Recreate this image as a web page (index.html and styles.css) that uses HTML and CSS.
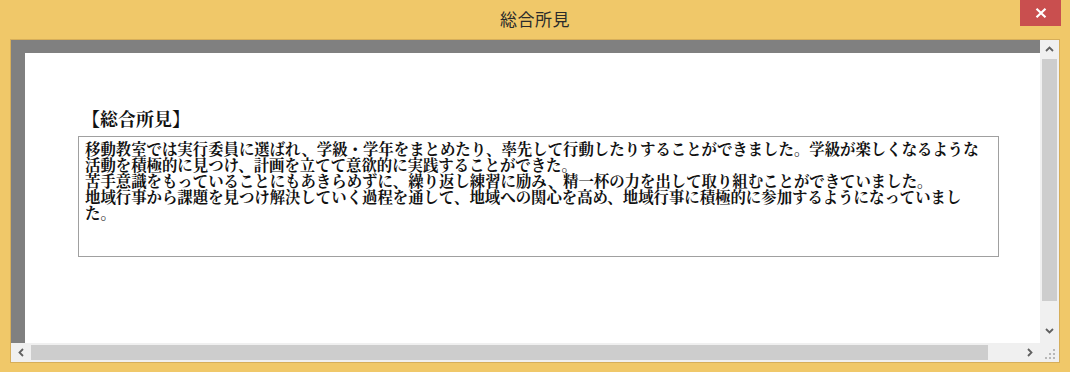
FILE: index.html
```html
<!DOCTYPE html>
<html lang="ja">
<head>
    <meta charset="UTF-8">
    <title>総合所見</title>
    <link rel="stylesheet" href="styles.css">
</head>
<body>
<div class="window">
    <div class="title-bar">
        <span class="title">総合所見</span>
        <button type="button" class="close-btn">
            <svg width="12" height="10" viewBox="0 0 12 10"><path d="M1.5 0.8 L10.5 9.2 M10.5 0.8 L1.5 9.2" stroke="#fff" stroke-width="2.2" fill="none"/></svg>
        </button>
    </div>

    <div class="frame">
        <div class="viewport">
            <div class="page">
                <h2 class="section-title">【総合所見】</h2>
                <div class="remarks">移動教室では実行委員に選ばれ、学級・学年をまとめたり、率先して行動したりすることができました。学級が楽しくなるような活動を積極的に見つけ、計画を立てて意欲的に実践することができた。<br>苦手意識をもっていることにもあきらめずに、繰り返し練習に励み、精一杯の力を出して取り組むことができていました。<br>地域行事から課題を見つけ解決していく過程を通して、地域への関心を高め、地域行事に積極的に参加するようになっていました。</div>
            </div>
        </div>

        <div class="vscroll">
            <svg class="arrow" width="9" height="6" viewBox="0 0 9 6"><path d="M1 5 L4.5 1.5 L8 5" stroke="#606060" stroke-width="1.8" fill="none"/></svg>
            <div class="vthumb"></div>
            <svg class="arrow" width="9" height="6" viewBox="0 0 9 6"><path d="M1 1 L4.5 4.5 L8 1" stroke="#606060" stroke-width="1.8" fill="none"/></svg>
        </div>

        <div class="hscroll">
            <svg class="arrow" width="6" height="9" viewBox="0 0 6 9"><path d="M5 1 L1.5 4.5 L5 8" stroke="#606060" stroke-width="1.8" fill="none"/></svg>
            <div class="hthumb"></div>
            <svg class="arrow" width="6" height="9" viewBox="0 0 6 9"><path d="M1 1 L4.5 4.5 L1 8" stroke="#606060" stroke-width="1.8" fill="none"/></svg>
        </div>

        <div class="corner">
            <svg width="10" height="10" viewBox="0 0 10 10" fill="#b8b8b8">
                <rect x="8" y="0" width="2" height="2"/>
                <rect x="8" y="4" width="2" height="2"/>
                <rect x="4" y="4" width="2" height="2"/>
                <rect x="8" y="8" width="2" height="2"/>
                <rect x="4" y="8" width="2" height="2"/>
                <rect x="0" y="8" width="2" height="2"/>
            </svg>
        </div>
    </div>
</div>
</body>
</html>
```

FILE: styles.css
```css
* {
    margin: 0;
    padding: 0;
    box-sizing: border-box;
}

body {
    width: 1070px;
    height: 372px;
    overflow: hidden;
    background-color: #f0c869;
    font-family: "Noto Sans CJK JP", "Noto Sans", sans-serif;
}

.window {
    display: flex;
    flex-direction: column;
    height: 372px;
}

.title-bar {
    position: relative;
    height: 39px;
    display: flex;
    justify-content: center;
    align-items: center;
    padding-bottom: 2px;
}

.title {
    font-size: 17px;
    color: #2b2b2b;
    letter-spacing: 0.5px;
}

.close-btn {
    position: absolute;
    top: 0;
    right: 9px;
    width: 41px;
    height: 26px;
    border: none;
    background-color: #c94f4f;
    display: flex;
    justify-content: center;
    align-items: center;
}

.frame {
    margin: 0 10px;
    height: 324px;
    border: 1px solid #d6ae5a;
    display: grid;
    grid-template-columns: 1fr 19px;
    grid-template-rows: 1fr 19px;
}

.viewport {
    background-color: #808080;
    padding: 13px 0 0 14px;
    overflow: hidden;
}

.page {
    background-color: #fff;
    height: 100%;
    padding-top: 53px;
    padding-left: 53px;
}

.section-title {
    font-family: "Noto Serif CJK JP", "Noto Sans CJK JP", serif;
    font-size: 18px;
    font-weight: 700;
    line-height: 24px;
    color: #111;
    margin-left: 4px;
    margin-bottom: 6px;
}

.remarks {
    width: 921px;
    height: 121px;
    border: 1px solid #a0a0a0;
    padding: 3px 6px 0 6px;
    font-family: "Noto Serif CJK JP", "Noto Sans CJK JP", serif;
    font-size: 15.4px;
    font-weight: 700;
    line-height: 16px;
    color: #111;
}

.vscroll {
    background-color: #f0f0f0;
    display: flex;
    flex-direction: column;
    align-items: center;
    padding: 6px 2px 9px;
}

.vthumb {
    width: 15px;
    flex: 1;
    margin: 7px 0 27px;
    background-color: #cdcdcd;
}

.hscroll {
    background-color: #f0f0f0;
    display: flex;
    align-items: center;
    padding: 2px 7px 2px 7px;
}

.hthumb {
    height: 15px;
    flex: 1;
    margin: 0 39px 0 7px;
    background-color: #cdcdcd;
}

.corner {
    background-color: #f0f0f0;
    display: flex;
    justify-content: flex-end;
    align-items: flex-end;
    padding: 0 4px 3px 0;
}
```
